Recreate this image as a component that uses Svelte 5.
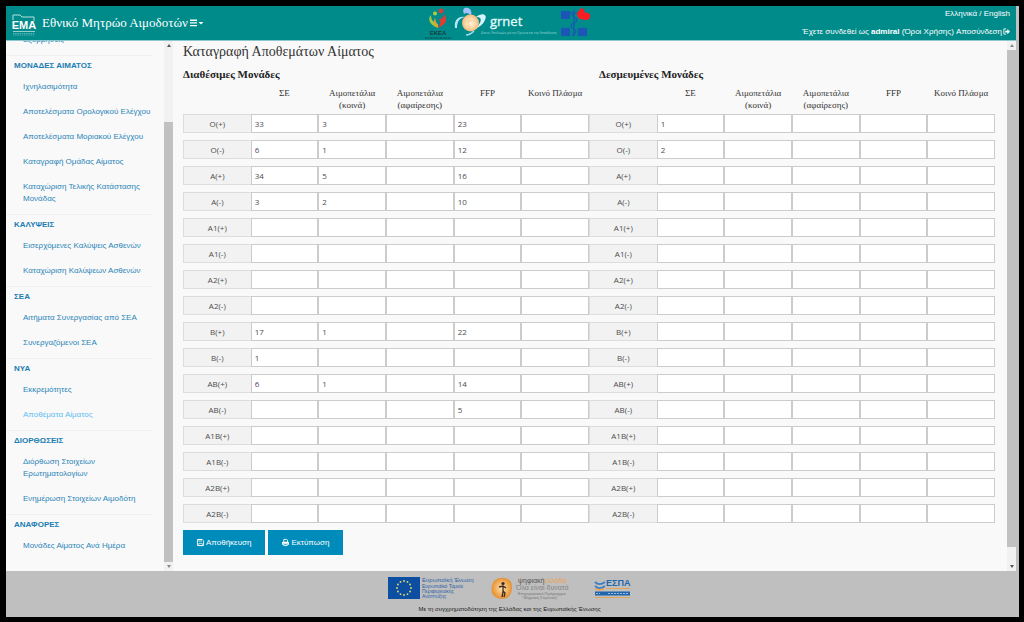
<script lang="ts">
	type Group = { title: string; items: string[] };

	const menu: Group[] = [
		{
			title: 'ΜΟΝΑΔΕΣ ΑΙΜΑΤΟΣ',
			items: [
				'Ιχνηλασιμότητα',
				'Αποτελέσματα Ορολογικού Ελέγχου',
				'Αποτελέσματα Μοριακού Ελέγχου',
				'Καταγραφή Ομάδας Αίματος',
				'Καταχώριση Τελικής Κατάστασης Μονάδας'
			]
		},
		{ title: 'ΚΑΛΥΨΕΙΣ', items: ['Εισερχόμενες Καλύψεις Ασθενών', 'Καταχώριση Καλύψεων Ασθενών'] },
		{ title: 'ΣΕΑ', items: ['Αιτήματα Συνεργασίας από ΣΕΑ', 'Συνεργαζόμενοι ΣΕΑ'] },
		{ title: 'ΝΥΑ', items: ['Εκκρεμότητες', 'Αποθέματα Αίματος'] },
		{
			title: 'ΔΙΟΡΘΩΣΕΙΣ',
			items: ['Διόρθωση Στοιχείων Ερωτηματολογίων', 'Ενημέρωση Στοιχείων Αιμοδότη']
		},
		{ title: 'ΑΝΑΦΟΡΕΣ', items: ['Μονάδες Αίματος Ανά Ημέρα'] }
	];
	const active = 'Αποθέματα Αίματος';

	const bloodTypes = [
		'O(+)', 'O(-)', 'A(+)', 'A(-)', 'A1(+)', 'A1(-)', 'A2(+)', 'A2(-)',
		'B(+)', 'B(-)', 'AB(+)', 'AB(-)', 'A1B(+)', 'A1B(-)', 'A2B(+)', 'A2B(-)'
	];
	const products = ['ΣΕ', 'Αιμοπετάλια (κοινά)', 'Αιμοπετάλια (αφαίρεσης)', 'FFP', 'Κοινό Πλάσμα'];

	type Stock = Record<string, string[]>;
	const stocks: { title: string; values: Stock }[] = [
		{
			title: 'Διαθέσιμες Μονάδες',
			values: {
				'O(+)': ['33', '3', '', '23', ''],
				'O(-)': ['6', '1', '', '12', ''],
				'A(+)': ['34', '5', '', '16', ''],
				'A(-)': ['3', '2', '', '10', ''],
				'B(+)': ['17', '1', '', '22', ''],
				'B(-)': ['1', '', '', '', ''],
				'AB(+)': ['6', '1', '', '14', ''],
				'AB(-)': ['', '', '', '5', '']
			}
		},
		{
			title: 'Δεσμευμένες Μονάδες',
			values: {
				'O(+)': ['1', '', '', '', ''],
				'O(-)': ['2', '', '', '', '']
			}
		}
	];

	// twelve stars of the EU flag
	const stars = Array.from({ length: 12 }, (_, i) => {
		const a = (i * Math.PI) / 6;
		return { x: 16 + 7 * Math.cos(a), y: 11 + 7 * Math.sin(a) };
	});
</script>

<div class="app">
	<header>
		<div class="brand">
			<svg class="ema" viewBox="0 0 24 24" aria-label="ΕΜΑ">
				<path d="M1 7V2h7l2 2h12v4" fill="none" stroke="#b9dede" stroke-width="1" />
				<text x="12" y="16" font-size="11" font-weight="bold" text-anchor="middle" fill="#fff">ΕΜΑ</text>
				<path d="M1 18.500h22" stroke="#d5eeee" stroke-width="0.700" />
				<path d="M1 20.500h22M1 22h22" stroke="#7fc4c4" stroke-width="0.700" stroke-dasharray="1.500 0.700" />
			</svg>
			<h1>Εθνικό Μητρώο Αιμοδοτών</h1>
			<button class="menu-toggle" aria-label="Μενού">
				<svg viewBox="0 0 14 8">
					<path d="M0 1.200h7M0 3.900h7M0 6.600h7" stroke="#fff" stroke-width="1.400" />
					<path d="M8.500 3h5l-2.500 2.500z" fill="#fff" />
				</svg>
			</button>
		</div>

		<div class="partners">
			<svg class="ekea" viewBox="0 0 28 34" aria-label="ΕΚΕΑ">
				<circle cx="11" cy="7.500" r="2" fill="#b5cc3a" />
				<circle cx="17" cy="5" r="2.400" fill="#e23b33" />
				<path d="M14 22C4 18 4 12 7 9c0 5 2 7 7 9z" fill="#a9c53b" />
				<path d="M14 22c9-4 10-9 6-14-1 5-3 5-6 5 4 2 2 5 0 9z" fill="#dc3e38" />
				<path d="M14 22c-4-3-5-7-3-10 1 4 2 6 3 10z" fill="#ec9a37" />
				<text x="14" y="29" font-size="6" font-weight="bold" text-anchor="middle" fill="#173c3c">ΕΚΕΑ</text>
				<path d="M1 32h26" stroke="#12494a" stroke-width="1" stroke-dasharray="2 0.500" />
			</svg>
			<svg class="grnet" viewBox="0 0 100 34" aria-label="grnet">
				<defs>
					<radialGradient id="globe">
						<stop offset="0" stop-color="#fff6dd" />
						<stop offset="0.600" stop-color="#fbd9a8" />
						<stop offset="1" stop-color="#f2b87a" />
					</radialGradient>
				</defs>
				<path d="M10 8C8 3 10 1 14 2c3 1 4 4 3 8-2-3-5-4-7-2z" fill="#a3c1ff" />
				<path d="M1 22c-1-8 3-12 10-11-5 1-8 4-8 11z" fill="#b9e4ff" />
				<path d="M22 11c6-5 12-3 9 3-2 5-7 8-11 9 6-4 8-9 6-11-1-1-2-1-4-1z" fill="#d5f4ff" />
				<circle cx="16.500" cy="17" r="8.500" fill="url(#globe)" />
				<path d="M9 17c5-3 10-3 15 0M16 9c-2 5-2 11 1 16" fill="none" stroke="#f0c190" stroke-width="0.600" />
				<path d="M12 29c4 0 6-2 8-4" fill="none" stroke="#9fe0ef" stroke-width="1.500" />
				<text x="36" y="20" font-size="13" stroke="#e5fbfb" stroke-width="0.300" fill="#e5fbfb">grnet</text>
				<text x="27" y="28" font-size="3" fill="#9fd8d8">Δίκτυο Υποδομών για την Έρευνα και την Εκπαίδευση</text>
			</svg>
			<svg class="health" viewBox="0 0 30 30" aria-label="Υπουργείο Υγείας">
				<path d="M1 4h9v8H1zM1 21h9v8H1zM18 21h9v8h-9z" fill="#1b55b5" />
				<path d="M14 3v26M12 7c0 4 5 3 5 6s-6 3-6 6 6 3 5 6-3 2-4 3M10 6h7" fill="none" stroke="#1b55b5" stroke-width="1.200" />
				<path d="M20 12l-2-2c-2-3-1-5 1-6 0-3 4-4 5-1l1 3c3-1 6 1 5 4 0 2-2 3-4 3z" fill="#fb1d24" />
			</svg>
		</div>

		<div class="user">
			<div><a href="#el">Ελληνικά</a> / <a href="#en">English</a></div>
			<div>
				Έχετε συνδεθεί ως <b>admiral</b> <a href="#terms">(Όροι Χρήσης)</a>
				<a href="#logout">Αποσύνδεση<svg class="logout" viewBox="0 0 8 8" aria-hidden="true">
						<path d="M3.500 1H1v6h2.500" fill="none" stroke="#fff" />
						<path d="M2.500 3H5V1l3 3-3 3V5H2.500z" fill="#fff" />
					</svg></a>
			</div>
		</div>
	</header>

	<main>
		<nav>
			<div class="menu">
				<a class="item" href="#sessions">Εξορμήσεις</a>
				{#each menu as group}
					<section>
						<h2>{group.title}</h2>
						{#each group.items as item}
							<a class="item" class:active={item === active} href="#item">{item}</a>
						{/each}
					</section>
				{/each}
			</div>
			<div class="scrollbar scrolled" aria-hidden="true">
				<span class="up"></span>
				<span class="before"></span>
				<span class="thumb"></span>
				<span class="down"></span>
			</div>
		</nav>

		<form class="content">
			<h3>Καταγραφή Αποθεμάτων Αίματος</h3>
			<div class="stocks">
				{#each stocks as stock}
					<div class="stock">
						<h4>{stock.title}</h4>
						<table>
							<thead>
								<tr>
									<td></td>
									{#each products as product}
										<th scope="col">{product}</th>
									{/each}
								</tr>
							</thead>
							<tbody>
								{#each bloodTypes as type}
									<tr>
										<th scope="row"><span class="type">{type}</span></th>
										{#each products as product, i}
											<td>
												<input
													type="text"
													aria-label="{stock.title} {type} {product}"
													value={stock.values[type]?.[i] ?? ''}
												/>
											</td>
										{/each}
									</tr>
								{/each}
							</tbody>
						</table>
					</div>
				{/each}
			</div>
			<div class="actions">
				<button type="button">
					<svg viewBox="0 0 8 8" aria-hidden="true">
						<path d="M0.500 0.500h5.500l1.500 1.500v5.500h-7z" fill="none" stroke="#fff" />
						<path d="M2 0.500h3v2H2zM2 5h4v2.500H2z" fill="none" stroke="#fff" stroke-width="0.800" />
					</svg>
					Αποθήκευση
				</button>
				<button type="button">
					<svg viewBox="0 0 8 8" aria-hidden="true">
						<path d="M2 3.500v-3h3.500l0.800 0.800v2.200M2 5.500h4v2H2z" fill="none" stroke="#fff" />
						<path d="M0 6.500V4l1-1h6l1 1v2.500H6.500V5h-5v1.500z" fill="#fff" />
					</svg>
					Εκτύπωση
				</button>
			</div>
		</form>
		<div class="scrollbar" aria-hidden="true">
			<span class="up"></span>
			<span class="thumb"></span>
			<span class="after"></span>
			<span class="down"></span>
		</div>
	</main>

	<footer>
		<div class="sponsors">
			<svg class="eu" viewBox="0 0 83 24" aria-label="Ευρωπαϊκή Ένωση">
				<rect width="32" height="22" fill="#0b4ea2" />
				{#each stars as star}
					<circle cx={star.x} cy={star.y} r="0.900" fill="#e8e06a" />
				{/each}
				<g font-size="6" fill="#2c62a8">
					<text x="34" y="5">Ευρωπαϊκή Ένωση</text>
					<g font-size="5">
						<text x="34" y="11">Ευρωπαϊκό Ταμείο</text>
						<text x="34" y="16">Περιφερειακής</text>
						<text x="34" y="21">Ανάπτυξης</text>
					</g>
				</g>
			</svg>
			<svg class="digital" viewBox="0 0 83 24" aria-label="Ψηφιακή Ελλάδα">
				<defs>
					<radialGradient id="amber">
						<stop offset="0" stop-color="#ffe2b0" />
						<stop offset="1" stop-color="#e8912f" />
					</radialGradient>
				</defs>
				<path d="M3 4C8-1 17 0 20 5c2 6 1 13-4 16-6 2-13 0-15-5-1-5 0-9 2-12z" fill="url(#amber)" />
				<circle cx="12" cy="6.500" r="1.600" fill="#3a2a20" />
				<path d="M8 10l4-1 3 2M12 9v6l-1 5M12 14l2 2-1 4" fill="none" stroke="#3a2a20" stroke-width="1.300" />
				<text x="27" y="6" font-size="7" fill="#555">ψηφιακή<tspan fill="#eda14c">ελλάδα</tspan></text>
				<text x="25" y="12.500" font-size="7" fill="#858585">Όλα είναι δυνατά</text>
				<text x="27" y="17.500" font-size="4" fill="#777">Επιχειρησιακό Πρόγραμμα</text>
				<text x="31" y="21.500" font-size="4" fill="#777">"Ψηφιακή Σύγκλιση"</text>
			</svg>
			<svg class="espa" viewBox="0 0 37 22" aria-label="ΕΣΠΑ">
				<path d="M1 5c3 3 6 3 10 0M1 9c3 3 6 3 10 0" fill="none" stroke="#3a7fc4" stroke-width="1.800" />
				<path d="M1 12c3 1 6 1 9 0" fill="none" stroke="#f0a24a" stroke-width="1.500" />
				<text x="12" y="8.500" font-size="9" font-weight="bold" fill="#1f66ad">ΕΣΠΑ</text>
				<path d="M12 11.500h24M1 20.500h35" stroke="#e0a45a" stroke-width="1" />
				<path d="M1 16.500h35" stroke="#1f66ad" stroke-width="4" />
				<path d="M2 16.500h4M14 16.500h21" stroke="#9dbbd6" stroke-width="1" stroke-dasharray="2 1" />
			</svg>
		</div>
		<p>Με τη συγχρηματοδότηση της Ελλάδας και της Ευρωπαϊκής Ένωσης</p>
	</footer>
</div>

<style>
	:global(body) {
		margin: 0;
		background: #000;
	}

	.app {
		box-sizing: border-box;
		display: flex;
		flex-direction: column;
		min-height: 100vh;
		border: 6px solid #000;
		border-width: 6px 5px 5px 6px;
		background: #f9f9f9;
		font-family: 'Liberation Sans', Arial, sans-serif;
		font-size: 8px;
		line-height: 12px;
	}

	.app a {
		text-decoration: none;
	}

	h1,
	h2,
	h3,
	h4,
	p {
		margin: 0;
		font-weight: normal;
	}

	h1,
	h3,
	h4,
	thead th {
		font-family: 'Liberation Serif', 'Times New Roman', serif;
	}

	svg {
		display: block;
		overflow: visible;
	}

	/* header */
	header {
		display: grid;
		grid-template-columns: 1fr auto 1fr;
		box-sizing: border-box;
		height: 35px;
		border-right: 3px solid #c0c0c0;
		border-bottom: 1px solid #8cc8cf;
		background: #008b8b;
		color: #fff;
	}

	.brand {
		display: flex;
		align-items: center;
		padding-left: 6px;
	}

	.ema {
		width: 24px;
		height: 24px;
		margin-top: 4px;
	}

	h1 {
		margin-left: 6px;
		font-size: 13px;
		line-height: 16px;
		white-space: nowrap;
	}

	.menu-toggle {
		margin-left: 2px;
		padding: 0;
		border: 0;
		background: none;
	}

	.menu-toggle svg {
		width: 14px;
		height: 8px;
	}

	.partners {
		display: flex;
		align-items: flex-start;
		padding-right: 8px;
	}

	.ekea {
		width: 28px;
		height: 34px;
	}

	.grnet {
		width: 100px;
		height: 34px;
		margin-left: 2px;
		font-family: 'Open Sans', sans-serif;
	}

	.health {
		width: 30px;
		height: 30px;
		margin: 1px 0 0 6px;
	}

	.user {
		display: flex;
		flex-direction: column;
		justify-content: space-between;
		padding: 2px 6px 2px 0;
		text-align: right;
		white-space: nowrap;
	}

	.user a {
		color: #fff;
	}

	.logout {
		display: inline-block;
		width: 7px;
		height: 7px;
		margin-left: 1px;
		vertical-align: -1px;
	}

	/* sidebar */
	main {
		display: flex;
		flex: 1;
		border-right: 3px solid #c0c0c0;
	}

	nav {
		display: flex;
		flex: none;
		width: 167px;
		overflow: hidden;
	}

	.menu {
		flex: 1;
		margin: -13px 11px 0 0;
		color: #1b7db3;
	}

	.item {
		display: block;
		padding: 6px 0 7px 17px;
		color: #2a84b8;
	}

	.item.active {
		color: #5dbdf0;
	}

	section {
		margin-top: 2px;
		padding-top: 4px;
		border-top: 1px solid #f0f0f0;
	}

	h2 {
		margin: 0 0 3px 8px;
		font-size: 8px;
		font-weight: bold;
	}

	.scrollbar {
		display: flex;
		flex: none;
		flex-direction: column;
		align-items: center;
		width: 9px;
		background: #f1f1f1;
	}

	.up,
	.down {
		margin: 3px 0;
		border: 2px solid transparent;
	}

	.up {
		border-top-width: 0;
		border-bottom: 3px solid #888;
	}

	.down {
		border-bottom-width: 0;
		border-top: 3px solid #555;
	}

	.thumb {
		flex: 97;
		width: 9px;
		background: #c1c1c1;
	}

	.after {
		flex: 3;
	}

	.before {
		flex: 14;
	}

	.scrolled .thumb {
		flex: 86;
	}

	.scrolled .up {
		border-bottom-color: #555;
	}

	.scrolled .down {
		border-top-color: #888;
	}

	/* stock tables */
	.content {
		flex: 1;
		min-width: 0;
		padding: 2px 12px 16px 10px;
	}

	h3 {
		color: #333;
		font-size: 14px;
		line-height: 18px;
	}

	.stocks {
		display: flex;
	}

	.stock {
		flex: 1;
	}

	h4 {
		margin-top: 6px;
		color: #222;
		font-size: 11px;
		font-weight: bold;
		line-height: 14px;
	}

	.stock + .stock h4 {
		padding-left: 10px;
	}

	table {
		width: 100%;
		table-layout: fixed;
		border-spacing: 0;
		margin-top: 6px;
	}

	th,
	td {
		padding: 0;
	}

	thead th {
		padding-bottom: 3px;
		color: #333;
		font-size: 9px;
		font-weight: normal;
		vertical-align: top;
	}

	tbody th,
	tbody td {
		padding-bottom: 7px;
	}

	.type,
	input {
		box-sizing: border-box;
		display: block;
		width: 100%;
		height: 19px;
		border: 1px solid #ccc;
		color: #4d4d4d;
		font-family: 'Open Sans', sans-serif;
		font-size: 8px;
		font-weight: normal;
		line-height: 17px;
	}

	.type {
		border-color: #ddd;
		border-right: 0;
		background: #f2f2f2;
	}

	input {
		padding: 0 3px;
		border-radius: 0;
		background: #fff;
	}

	.actions {
		display: flex;
		gap: 3px;
	}

	.actions button {
		display: flex;
		align-items: center;
		gap: 2px;
		height: 25px;
		padding: 0 14px;
		border: 0;
		background: #008cba;
		color: #fff;
		font-family: inherit;
		font-size: 8px;
	}

	.actions svg {
		width: 7px;
		height: 7px;
	}

	/* footer */
	footer {
		box-sizing: border-box;
		height: 46px;
		padding: 6px 6px 0 0;
		background: #bfbfbf;
		color: #222;
		text-align: center;
	}

	.sponsors {
		display: flex;
		justify-content: center;
		gap: 20px;
		height: 24px;
	}

	.eu,
	.digital {
		width: 83px;
		height: 24px;
	}

	.espa {
		width: 37px;
		height: 22px;
	}

	footer p {
		margin-top: 2px;
		font-size: 6px;
	}
</style>
